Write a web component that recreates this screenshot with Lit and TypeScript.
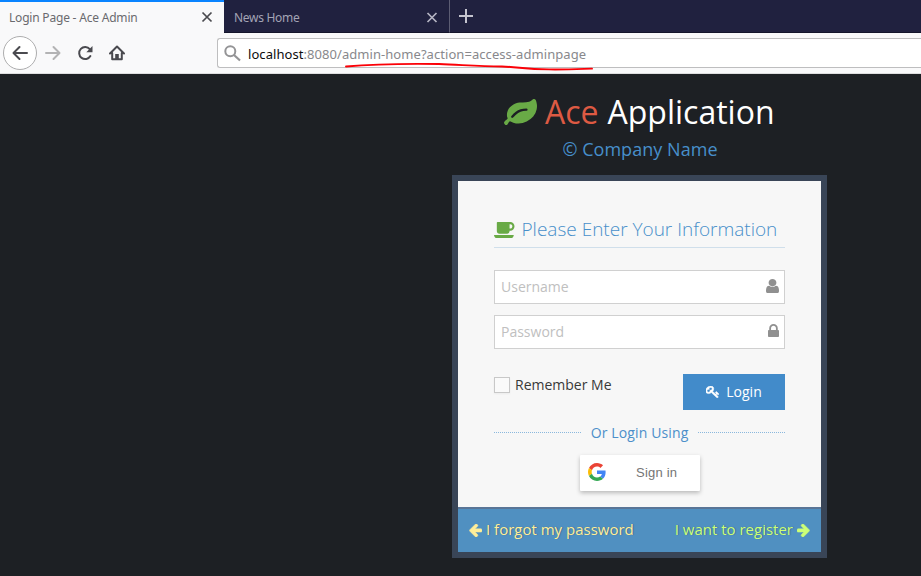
import { LitElement, html, css, svg } from "lit";
import { customElement } from "lit/decorators.js";

const glyphs = {
  leaf: "M1280 704q0-26-19-45t-45-19q-172 0-318 49.5t-259.5 134-235.5 219.5q-19 21-19 45 0 26 19 45t45 19q24 0 45-19 27-24 74-71t67-66q137-124 268.5-176t313.5-52q26 0 45-19t19-45zm512-198q0 95-20 193-46 224-184.5 383t-357.5 268q-214 108-438 108-148 0-286-47-15-5-88-42t-96-37q-16 0-39.5 32t-45 70-52.5 70-60 32q-43 0-63.5-17.5t-45.5-59.5q-2-4-6-11t-5.5-10-3-9.5-1.5-13.5q0-35 31-73.5t68-65.5 68-56 31-48q0-4-14-38t-16-44q-9-51-9-104 0-115 43.5-220t119-184.5 170.5-139 204-95.5q55-18 145-25.5t179.5-9 178.5-6 163.5-24 113.5-56.5l29.5-29.5 29.5-28 27-20 36.5-16 43.5-4.5q39 0 70.5 46t47.5 112 24 124 8 96z",
  coffee: "M1664 640q0-80-56-136t-136-56h-64v384h64q80 0 136-56t56-136zM0 1408h1792q0 106-75 181t-181 75h-1280q-106 0-181-75t-75-181zM1856 640q0 159-112.5 271.5t-271.5 112.5h-64v32q0 92-66 158t-158 66h-704q-92 0-158-66t-66-158v-736q0-26 19-45t45-19h1152q159 0 271.5 112.5t112.5 271.5z",
  user: "M1536 1399q0 109-62.5 187t-150.5 78h-854q-88 0-150.5-78t-62.5-187q0-85 8.5-160.5t31.5-152 58.5-131 94-89 134.5-34.5q131 128 313 128t313-128q76 0 134.5 34.5t94 89 58.5 131 31.5 152 8.5 160.5zm-256-887q0 159-112.5 271.5t-271.5 112.5-271.5-112.5-112.5-271.5 112.5-271.5 271.5-112.5 271.5 112.5 112.5 271.5z",
  lock: "M640 768h512v-192q0-106-75-181t-181-75-181 75-75 181v192zm832 96v576q0 40-28 68t-68 28h-960q-40 0-68-28t-28-68v-576q0-40 28-68t68-28h32v-192q0-184 132-316t316-132 316 132 132 316v192h32q40 0 68 28t28 68z",
  key: "M832 512q0-80-56-136t-136-56-136 56-56 136q0 42 19 83-41-19-83-19-80 0-136 56t-56 136 56 136 136 56 136-56 56-136q0-42-19-83 41 19 83 19 80 0 136-56t56-136zm851 704q0 17-49 66t-66 49q-9 0-28.5-16t-36.5-33-38.5-40-24.5-26l-96 96 220 220q28 28 28 68 0 42-39 81t-81 39q-40 0-68-28l-671-671q-176 131-365 131-163 0-265.5-102.5t-102.5-265.5q0-160 95-313t248-248 313-95q163 0 265.5 102.5t102.5 265.5q0 189-131 365l355 355 96-96q-3-3-26-24.5t-40-38.5-33-36.5-16-28.5q0-17 49-66t66-49q13 0 23 10 6 6 46 44.5t82 79.5 86.5 86 73 78 28.5 41z",
  arrow: "M1664 896v128q0 53-32.5 90.5t-84.5 37.5h-704l293 294q38 36 38 90t-38 90l-75 76q-37 37-90 37-52 0-91-37l-651-652q-37-37-37-90 0-52 37-91l651-650q38-38 91-38 52 0 90 38l75 74q38 38 38 91t-38 91l-293 293h704q52 0 84.5 37.5t32.5 90.5z",
};

const glyph = (d: string, cls: string, box: string) =>
  html`<svg class=${cls} viewBox=${box} preserveAspectRatio="none">${svg`<path fill="currentColor" d=${d}/>`}</svg>`;

@customElement("browser-chrome")
class BrowserChrome extends LitElement {
  static styles = css`
    :host { display: block; height: 74px; font-family: "Noto Sans", "Open Sans", sans-serif; }
    .tabs { display: flex; height: 33px; background: #20213f; box-sizing: border-box; }
    .tab { box-sizing: border-box; display: flex; align-items: center; justify-content: space-between; height: 33px; font-size: 12px; border-bottom: 1px solid #14152b; }
    .tab.active { width: 224px; background: #f9f9fa; border-top: 2px solid #0a84ff; border-bottom: 0; padding: 0 11px 0 9px; color: #6a6a6e; }
    .tab.idle { width: 226px; padding: 3px 11px 0 10px; border-right: 1px solid #5c5d73; color: #a3a4b5; }
    .tab.idle .name { letter-spacing: -0.3px; }
    .name { white-space: nowrap; }
    .active .name { letter-spacing: -0.2px; }
    .close { width: 12px; height: 12px; flex: none; }
    .active .close { margin-top: -1px; }
    .rest { flex: 1; border-bottom: 1px solid #14152b; }
    .plus { display: block; width: 14px; height: 14px; margin: 9px 0 0 9px; }
    .bar { display: flex; box-sizing: border-box; height: 41px; background: #f9f9fa; border-bottom: 1px solid #dededf; padding: 3px 0 0 3px; align-items: flex-start; }
    .back { box-sizing: border-box; width: 34px; height: 34px; border: 1px solid #adadae; border-radius: 50%; background: #fff; display: grid; place-items: center; }
    .nav { width: 16px; height: 16px; flex: none; }
    .fwd { margin: 9px 0 0 8px; }
    .reload { margin: 9px 0 0 16px; }
    .home { margin: 9px 0 0 16px; }
    .url { box-sizing: border-box; position: relative; margin: 2px 0 0 92px; flex: 1; height: 30px; border: 1px solid #bebebf; border-right: 0; border-radius: 3px 0 0 3px; background: #fff; display: flex; align-items: center; color: #88888c; font-size: 13px; white-space: nowrap; }
    .search { width: 17px; height: 17px; margin: 0 7px 0 6px; }
    .host { color: #0c0c0d; }
    .addr { letter-spacing: 0.06px; padding-top: 2px; }
    .mark { position: absolute; left: 126px; top: 21px; width: 252px; height: 10px; overflow: visible; }
  `;
  render() {
    return html`
      <div class="tabs">
        <div class="tab active"><span class="name">Login Page - Ace Admin</span>
          <svg class="close" viewBox="0 0 12 12"><path d="M1.5 1.5 10.5 10.5M10.5 1.5 1.5 10.5" stroke="#4a4a4f" stroke-width="1.7"/></svg></div>
        <div class="tab idle"><span class="name">News Home</span>
          <svg class="close" viewBox="0 0 12 12"><path d="M1.5 1 10.5 10M10.5 1 1.5 10" stroke="#b5b5c3" stroke-width="1.7"/></svg></div>
        <div class="rest"><svg class="plus" viewBox="0 0 14 14"><path d="M7 0V14M0 7H14" stroke="#c4c4cf" stroke-width="2"/></svg></div>
      </div>
      <div class="bar">
        <span class="back"><svg class="nav" viewBox="0 0 16 16"><path d="M15 8H2M7.5 2 1.5 8 7.5 14" fill="none" stroke="#4a4a4f" stroke-width="2" stroke-linecap="round" stroke-linejoin="round"/></svg></span>
        <svg class="nav fwd" viewBox="0 0 16 16"><path d="M1 8H14M8.5 2 14.5 8 8.5 14" fill="none" stroke="#b3b3b4" stroke-width="2" stroke-linecap="round" stroke-linejoin="round"/></svg>
        <svg class="nav reload" viewBox="0 0 16 16"><path d="M12.8 4.2A6 6 0 1 0 13.4 11" fill="none" stroke="#4a4a4f" stroke-width="2" stroke-linecap="round"/><path d="M15.5 1V7.2H9.3Z" fill="#4a4a4f"/></svg>
        <svg class="nav home" viewBox="0 0 16 16"><path d="M1 8.5 8 1.5 15 8.5M3.2 8V14.3H12.8V8" fill="none" stroke="#4a4a4f" stroke-width="2" stroke-linecap="round" stroke-linejoin="round"/><path d="M6.2 14V9H9.8V14Z" fill="#4a4a4f"/></svg>
        <div class="url">
          <svg class="search" viewBox="0 0 17 17"><circle cx="6.3" cy="6.3" r="5" fill="none" stroke="#949496" stroke-width="2"/><path d="M10 10 16 15.5" stroke="#949496" stroke-width="2.2"/></svg>
          <span class="addr"><span class="host">localhost</span>:8080/admin-home?action=access-adminpage</span>
          <svg class="mark" viewBox="0 0 252 10"><path d="M2 6.5C30 4 60 3.5 95 4C120 5 135 6.3 158 6.5C175 7 180 9.2 205 9.4C225 9.6 235 9 248 8.6" fill="none" stroke="#fb0007" stroke-width="1.9" stroke-linecap="round"/></svg>
        </div>
      </div>`;
  }
}

@customElement("login-card")
class LoginCard extends LitElement {
  static styles = css`
    :host { display: block; width: 375px; height: 383px; box-sizing: border-box; border: 6px solid #394557; background: #f7f7f7; font-family: "Open Sans", "Noto Sans", sans-serif; }
    .main { box-sizing: border-box; height: 326px; padding: 36px 36px 0; display: flex; flex-direction: column; }
    .title { margin: 0; height: 24px; padding-bottom: 6px; border-bottom: 1px solid #d0dfeb; display: flex; align-items: center; font-size: 19px; font-weight: 300; color: #478fca; white-space: nowrap; line-height: 24px; }
    .title span { margin-left: 7px; }
    .coffee { width: 20.5px; height: 16px; color: #69aa46; margin-top: 1px; }
    .field { box-sizing: border-box; height: 34px; border: 1px solid #d0d0d0; background: #fff; display: flex; align-items: center; padding: 0 5px 0 6px; margin-top: 22px; }
    .field + .field { margin-top: 11px; }
    .entry { flex: 1; min-width: 0; border: 0; outline: 0; padding: 0 0 2px; font: 14px "Open Sans", sans-serif; background: none; }
    .entry::placeholder { color: #c0c0c0; opacity: 1; }
    .user { width: 13px; height: 14.5px; color: #909090; margin-top: -2px; }
    .lock { width: 11px; height: 13px; color: #909090; margin-top: -3px; }
    .row { display: flex; justify-content: space-between; margin-top: 25px; height: 36px; }
    .remember { display: flex; height: 22px; align-items: center; font-size: 14px; color: #393939; }
    .remember span { padding-bottom: 2px; }
    .box { box-sizing: border-box; width: 16px; height: 16px; border: 1px solid #c8c8c8; background: #fafafa; margin-right: 5px; box-shadow: 0 1px 2px rgba(0,0,0,.05); }
    .login { width: 102px; height: 36px; border: 0; padding: 0; background: #428bca; color: #fff; font: 14px "Open Sans", sans-serif; display: flex; align-items: center; justify-content: center; gap: 7px; }
    .login span { padding-bottom: 2px; }
    .key { width: 13px; height: 12px; stroke: currentColor; stroke-width: 70; }
    .or { display: flex; align-items: center; gap: 9.5px; height: 22px; margin-top: 11px; color: #4c8fca; font-size: 14px; letter-spacing: .13px; white-space: nowrap; }
    .or::before, .or::after { content: ""; flex: 1; border-top: 1px dotted #8bb8dd; }
    .google { align-self: center; box-sizing: border-box; width: 120px; height: 36px; margin-top: 12px; background: #fff; border-radius: 1px; box-shadow: 0 2px 4px rgba(0,0,0,.25); display: flex; align-items: center; padding-left: 8px; color: #757575; font: 13px "Liberation Sans", sans-serif; letter-spacing: .21px; }
    .google span { padding-bottom: 2px; }
    .g { width: 18px; height: 18px; margin-right: 30.5px; margin-top: -2px; }
    .foot { box-sizing: border-box; height: 45px; background: #5090c1; border-top: 2px solid #597597; padding: 0 11px 2px; display: flex; align-items: center; justify-content: space-between; font-size: 15px; text-shadow: 1px 0 1px rgba(0,0,0,.25); white-space: nowrap; }
    .foot span { display: flex; align-items: center; gap: 4px; }
    .foot b { font-weight: 400; padding-bottom: 2px; }
    .forgot { color: #fe9; }
    .register { color: #cf7; }
    .arrow { width: 13px; height: 13px; margin-top: 1px; stroke: currentColor; stroke-width: 60; }
    .flip { transform: scaleX(-1); }
  `;
  render() {
    return html`
      <div class="main">
        <h4 class="title">${glyph(glyphs.coffee, "coffee", "0 256 1856 1408")}<span>Please Enter Your Information</span></h4>
        <label class="field"><input class="entry" placeholder="Username">${glyph(glyphs.user, "user", "256 128 1280 1536")}</label>
        <label class="field"><input class="entry" type="password" placeholder="Password">${glyph(glyphs.lock, "lock", "320 128 1152 1408")}</label>
        <div class="row">
          <label class="remember"><i class="box"></i><span>Remember Me</span></label>
          <button class="login">${glyph(glyphs.key, "key", "64 128 1620 1620")}<span>Login</span></button>
        </div>
        <div class="or">Or Login Using</div>
        <div class="google">
          <svg class="g" viewBox="0 0 48 48">
            <path fill="#EA4335" d="M24 9.5c3.54 0 6.71 1.22 9.21 3.6l6.85-6.85C35.9 2.38 30.47 0 24 0 14.62 0 6.51 5.38 2.56 13.22l7.98 6.19C12.43 13.72 17.74 9.5 24 9.5z"/>
            <path fill="#4285F4" d="M46.98 24.55c0-1.57-.15-3.09-.38-4.55H24v9.02h12.94c-.58 2.96-2.26 5.48-4.78 7.18l7.73 6c4.51-4.18 7.09-10.36 7.09-17.65z"/>
            <path fill="#FBBC05" d="M10.53 28.59A14.5 14.5 0 0 1 9.77 24c0-1.6.27-3.14.76-4.59l-7.98-6.19A23.99 23.99 0 0 0 0 24c0 3.88.92 7.54 2.56 10.78l7.97-6.19z"/>
            <path fill="#34A853" d="M24 48c6.48 0 11.93-2.13 15.89-5.81l-7.73-6c-2.15 1.45-4.92 2.3-8.16 2.3-6.26 0-11.57-4.22-13.47-9.91l-7.98 6.19C6.51 42.62 14.62 48 24 48z"/>
          </svg>
          <span>Sign in</span>
        </div>
      </div>
      <div class="foot">
        <span class="forgot">${glyph(glyphs.arrow, "arrow", "128 200 1536 1530")}<b>I forgot my password</b></span>
        <span class="register"><b>I want to register</b>${glyph(glyphs.arrow, "arrow flip", "128 200 1536 1530")}</span>
      </div>`;
  }
}

@customElement("app-root")
class AppRoot extends LitElement {
  static styles = css`
    :host { display: block; width: 921px; height: 576px; overflow: hidden; background: #1d2024; font-family: "Open Sans", "Noto Sans", sans-serif; }
    .page { display: flex; flex-direction: column; align-items: center; width: 375px; margin-left: 452px; }
    .brand { margin: 18px 0 0; height: 40px; display: flex; align-items: center; font-size: 32px; font-weight: 400; color: #fff; white-space: nowrap; line-height: 40px; }
    .leaf { width: 33px; height: 26px; color: #69aa46; margin: 0 7.5px 1px 0; }
    .ace { color: #dd5a43; margin-right: 9px; }
    .company { margin: 4px 0 0; height: 26px; line-height: 26px; font-size: 18px; font-weight: 400; color: #478fca; letter-spacing: .04px; white-space: nowrap; padding-left: 1px; }
    .card { margin-top: 13px; }
  `;
  render() {
    return html`
      <browser-chrome></browser-chrome>
      <div class="page">
        <h1 class="brand">${glyph(glyphs.leaf, "leaf", "0 128 1792 1408")}<span class="ace">Ace</span><span>Application</span></h1>
        <h4 class="company">© Company Name</h4>
        <login-card class="card"></login-card>
      </div>`;
  }
}
